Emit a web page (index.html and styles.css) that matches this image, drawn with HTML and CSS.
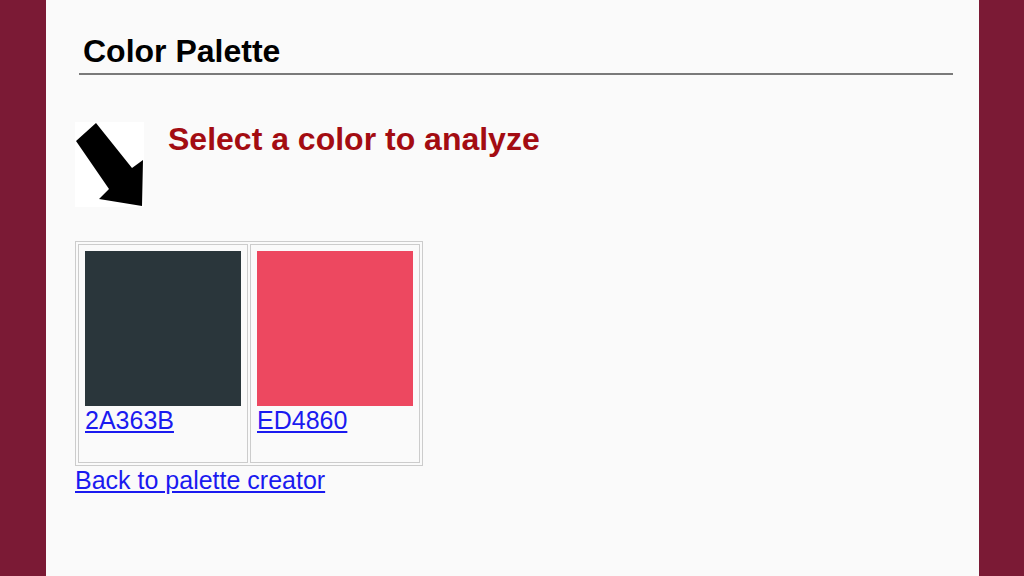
FILE: index.html
```html
<!DOCTYPE html>
<html lang="en">
<head>
  <meta charset="UTF-8">
  <meta name="viewport" content="width=device-width, initial-scale=1.0">
  <title>Color Palette</title>
  <link rel="stylesheet" href="styles.css">
</head>
<body>
  <div class="page">
    <h1 class="page-title">Color Palette</h1>

    <!-- Prompt with arrow -->
    <div class="prompt">
      <svg class="arrow" width="69" height="85" viewBox="0 0 69 85">
        <rect width="69" height="85" fill="#fff"/>
        <polygon points="1,19 21,1 57,46 68,38 67,84 24,77 34,67" fill="#000"/>
      </svg>
      <h2 class="prompt-text">Select a color to analyze</h2>
    </div>

    <!-- Swatches -->
    <table class="swatches">
      <tr>
        <td class="swatch-cell">
          <div class="swatch" style="background-color: #2A363B;"></div>
          <a href="#" class="swatch-link">2A363B</a>
        </td>
        <td class="swatch-cell">
          <div class="swatch" style="background-color: #ED4860;"></div>
          <a href="#" class="swatch-link">ED4860</a>
        </td>
      </tr>
    </table>

    <a href="#" class="back-link">Back to palette creator</a>
  </div>
</body>
</html>
```

FILE: styles.css
```css
html, body {
  height: 100%;
}

body {
  margin: 0;
  padding: 0;
  background-color: #7b1a35;
  font-family: "Liberation Sans", Arial, sans-serif;
  overflow: hidden;
}

.page {
  width: 933px;
  min-height: 100%;
  margin-left: 46px;
  padding: 33px 0 0 29px;
  box-sizing: border-box;
  background-color: #fafafa;
}

.page-title {
  margin: 0 26px 0 4px;
  padding: 0 0 3px 4px;
  font-size: 32px;
  font-weight: bold;
  color: #000;
  border-bottom: 2px solid #7a7a7a;
}

.prompt {
  display: flex;
  align-items: flex-start;
  gap: 24px;
  margin-top: 46px;
}

.arrow {
  display: block;
  margin-top: 1px;
}

.prompt-text {
  margin: 0;
  font-size: 32px;
  font-weight: bold;
  color: #a30c12;
}

.swatches {
  margin-top: 34px;
  border: 1px solid #cccccc;
  border-spacing: 2px;
}

.swatch-cell {
  border: 1px solid #cccccc;
  padding: 6px 6px 27px 6px;
  vertical-align: top;
}

.swatch {
  width: 156px;
  height: 155px;
}

.swatch-link,
.back-link {
  font-size: 25px;
  color: #1a1af0;
}

.back-link {
  display: inline-block;
}
```
